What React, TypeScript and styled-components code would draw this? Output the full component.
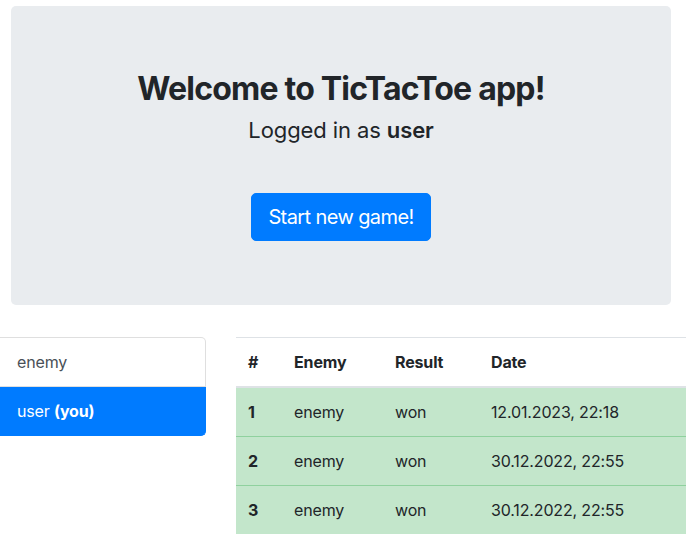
import React from "react";
import styled, { createGlobalStyle } from "styled-components";

const Global = createGlobalStyle`
  html, body { margin: 0; padding: 0; background: #fff; }
  body {
    font-family: Inter, "Noto Sans", sans-serif;
    font-size: 16px;
    line-height: 1.5;
    color: #212529;
  }
  * { box-sizing: border-box; }
`;

const Page = styled.div`
  padding-top: 6px;
  width: 699px;
  overflow: hidden;
`;

const Jumbotron = styled.section`
  margin: 0 28px 0 11px;
  padding: 64px 32px;
  background: #e9ecef;
  border-radius: 5px;
  display: flex;
  flex-direction: column;
  align-items: center;
  text-align: center;
`;

const Title = styled.h1`
  margin: 0 0 6px;
  font-size: 32px;
  font-weight: 700;
  line-height: 1.2;
  letter-spacing: -0.8px;
`;

const Subtitle = styled.p`
  margin: 0 0 46px;
  font-size: 22px;
  line-height: 33px;
  letter-spacing: -0.1px;
  b { font-weight: 600; }
`;

const PrimaryButton = styled.button`
  font-family: inherit;
  font-size: 20px;
  line-height: 30px;
  letter-spacing: -0.6px;
  padding: 8px 16px;
  color: #fff;
  background: #007bff;
  border: 1px solid #007bff;
  border-radius: 5px;
  cursor: pointer;
`;

const Bottom = styled.div`
  display: flex;
  gap: 30px;
  margin-top: 32px;
  margin-left: -4px;
  align-items: flex-start;
  letter-spacing: -0.15px;
`;

const ListGroup = styled.ul`
  list-style: none;
  margin: 0;
  padding: 0;
  width: 210px;
  flex: none;
`;

const ListItem = styled.li<{ $active?: boolean }>`
  padding: 12px 20px;
  line-height: 24px;
  border: 1px solid ${(p) => (p.$active ? "#007bff" : "rgba(0,0,0,0.125)")};
  background: ${(p) => (p.$active ? "#007bff" : "#fff")};
  color: ${(p) => (p.$active ? "#fff" : "#495057")};
  & + & { border-top-width: 0; }
  &:first-child { border-top-left-radius: 5px; border-top-right-radius: 5px; }
  &:last-child { border-bottom-left-radius: 5px; border-bottom-right-radius: 5px; }
  b { font-weight: 700; }
`;

const Table = styled.table`
  width: 450px;
  flex: none;
  border-collapse: collapse;
  color: #212529;
`;

const Th = styled.th<{ $w?: number }>`
  text-align: left;
  font-weight: 700;
  padding: 12px;
  line-height: 24px;
  border-top: 1px solid #dee2e6;
  border-bottom: 2px solid #dee2e6;
  width: ${(p) => (p.$w ? `${p.$w}px` : "auto")};
`;

const Row = styled.tr`
  background: #c3e6cb;
`;

const Td = styled.td<{ $bold?: boolean }>`
  padding: 12px;
  line-height: 24px;
  border-top: 1px solid #8fd19e;
  font-weight: ${(p) => (p.$bold ? 700 : 400)};
`;

const games = [
  { id: 1, enemy: "enemy", result: "won", date: "12.01.2023, 22:18" },
  { id: 2, enemy: "enemy", result: "won", date: "30.12.2022, 22:55" },
  { id: 3, enemy: "enemy", result: "won", date: "30.12.2022, 22:55" },
];

export default function App() {
  return (
    <Page>
      <Global />
      <Jumbotron>
        <Title>Welcome to TicTacToe app!</Title>
        <Subtitle>
          Logged in as <b>user</b>
        </Subtitle>
        <PrimaryButton>Start new game!</PrimaryButton>
      </Jumbotron>
      <Bottom>
        <ListGroup>
          <ListItem>enemy</ListItem>
          <ListItem $active>
            user <b>(you)</b>
          </ListItem>
        </ListGroup>
        <Table>
          <thead>
            <tr>
              <Th $w={46}>#</Th>
              <Th $w={101}>Enemy</Th>
              <Th $w={96}>Result</Th>
              <Th>Date</Th>
            </tr>
          </thead>
          <tbody>
            {games.map((g) => (
              <Row key={g.id}>
                <Td $bold>{g.id}</Td>
                <Td>{g.enemy}</Td>
                <Td>{g.result}</Td>
                <Td>{g.date}</Td>
              </Row>
            ))}
          </tbody>
        </Table>
      </Bottom>
    </Page>
  );
}
